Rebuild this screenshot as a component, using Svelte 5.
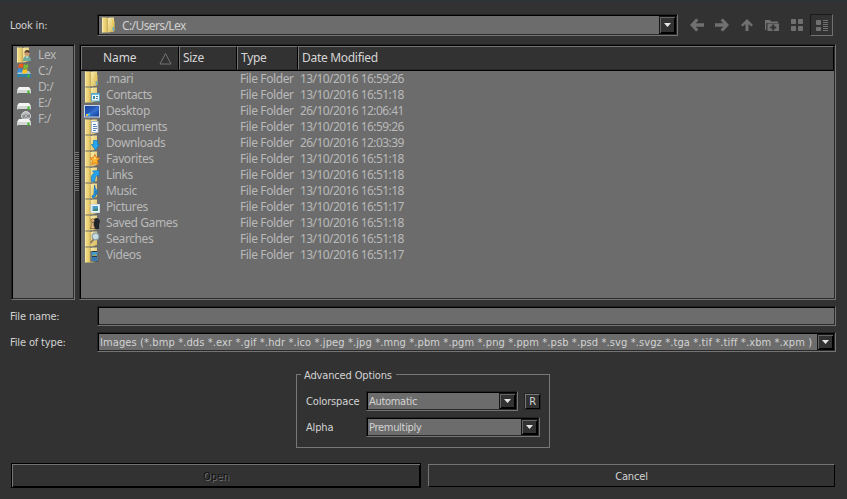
<script lang="ts">
  const places = [
    { name: 'Lex', icon: 'user' },
    { name: 'C:/', icon: 'windows' },
    { name: 'D:/', icon: 'drive' },
    { name: 'E:/', icon: 'drive' },
    { name: 'F:/', icon: 'disc' }
  ];

  const files = [
    { name: '.mari', icon: 'plain', date: '13/10/2016 16:59:26' },
    { name: 'Contacts', icon: 'contacts', date: '13/10/2016 16:51:18' },
    { name: 'Desktop', icon: 'desktop', date: '26/10/2016 12:06:41' },
    { name: 'Documents', icon: 'documents', date: '13/10/2016 16:59:26' },
    { name: 'Downloads', icon: 'downloads', date: '26/10/2016 12:03:39' },
    { name: 'Favorites', icon: 'favorites', date: '13/10/2016 16:51:18' },
    { name: 'Links', icon: 'links', date: '13/10/2016 16:51:18' },
    { name: 'Music', icon: 'music', date: '13/10/2016 16:51:18' },
    { name: 'Pictures', icon: 'pictures', date: '13/10/2016 16:51:17' },
    { name: 'Saved Games', icon: 'games', date: '13/10/2016 16:51:18' },
    { name: 'Searches', icon: 'searches', date: '13/10/2016 16:51:18' },
    { name: 'Videos', icon: 'videos', date: '13/10/2016 16:51:17' }
  ];

  const tools = ['back', 'forward', 'up', 'new', 'list', 'detail'];
  const filter = 'Images (*.bmp *.dds *.exr *.gif *.hdr *.ico *.jpeg *.jpg *.mng *.pbm *.pgm *.png *.ppm *.psb *.psd *.svg *.svgz *.tga *.tif *.tiff *.xbm *.xpm )';

  let view = $state('detail');
</script>

{#snippet icon(kind: string)}
  <svg class="icon" viewBox="0 0 16 16" width="16" height="16">
    {#if kind === 'drive' || kind === 'disc' || kind === 'windows'}
      {#if kind === 'disc'}
        <circle cx="10" cy="5" r="4.500" fill="#b9bdbe" stroke="#eee" stroke-width=".7" />
        <path d="M10 5l4-2v4zM10 5L6.500 8V4z" fill="#858b8c" />
        <circle cx="10" cy="5" r="1.400" fill="#e8e8e8" stroke="#5d5d5d" stroke-width=".7" />
      {/if}
      <path d="M3 8h10l2 3H1z" fill={kind === 'windows' ? '#a9c2cf' : '#f4f4f4'} />
      <rect x="1" y="11" width="14" height="4" rx=".8" fill={kind === 'windows' ? '#2f82a5' : '#d4d5d5'} />
      <path d="M1.500 14.500h13" stroke="#656b6c" />
      <rect x="11.500" y="11.500" width="2" height="3" fill="#3fbd22" />
      {#if kind === 'windows'}
        <path d="M3 1q2.500-1 4.500 0l-.8 4q-2-1-4.500 0z" fill="#ef5b1d" />
        <path d="M8 1.300q2 1 4.500 0l-.8 4q-2 1-4.500 0z" fill="#79bb32" />
        <path d="M2 5.700q2.300-1 4.500 0l-.8 4q-2-1-4.500 0z" fill="#348fdb" />
        <path d="M7 6q2 1 4.500 0l-.8 4q-2 1-4.500 0z" fill="#fbc51e" />
      {/if}
    {:else if kind === 'desktop'}
      <rect x=".5" y="2.500" width="15" height="11.500" fill="url(#screen)" stroke="#c9d5e5" />
      <path d="M1 13L14 3v4L5 13z" fill="#4a84d9" opacity=".35" />
      <rect x="2" y="11" width="2" height="2" fill="#e8c33d" />
      <rect x="4" y="10.500" width="2" height="2" fill="#48c8ef" />
    {:else}
      <path d="M1 .5h5.500v15H1z" fill="url(#folder)" />
      <path d="M6 1.500L8.500.5H13v13.500l-5 1.500-2-.5z" fill="url(#fold)" />
      <path d="M6.300 1.500v13.300" stroke="#b99843" stroke-width=".8" />
      <path d="M1.500 .5v15" stroke="#fbedb0" stroke-width=".8" />
      {#if kind === 'plain'}
        <path d="M11 3l2.500 1v10L11 15z" fill="#e7c95f" />
        <path d="M12.300 10v4" stroke="#58a6d5" stroke-width="1.200" />
      {:else if kind === 'user'}
        <circle cx="11" cy="6.500" r="2.500" fill="#c89b70" />
        <path d="M8.500 6q0-3 2.800-3T13.500 6q-3-1.500-5 0" fill="#584030" />
        <path d="M7 14q0-5 4-5t4 5z" fill="#6dab9e" />
        <path d="M10 9.500l1 2 1-2z" fill="#fff" />
      {:else if kind === 'contacts'}
        <rect x="7.500" y="6.500" width="8" height="7.500" fill="#eaf5fa" stroke="#5fa8c8" />
        <path d="M7.500 7h8" stroke="#4ea7ce" stroke-width="1.500" />
        <rect x="9" y="9" width="2" height="3" fill="#3f89ad" />
        <path d="M12 9.500h2M12 11.500h2" stroke="#507f9b" />
      {:else if kind === 'documents'}
        <rect x="7.500" y="2.500" width="6.500" height="11" fill="#fafcff" stroke="#aabacc" />
        <path d="M9 5.500h3M9 7.500h4M9 9.500h4M9 11.500h3" stroke="#5781bd" />
      {:else if kind === 'downloads'}
        <path d="M9.500 5.500h4v4h2L11.500 15l-4-5.500h2z" fill="#28a7ed" stroke="#1476bb" stroke-width=".7" />
      {:else if kind === 'favorites'}
        <path d="M11 3.500l1.400 3.200 3.300.3-2.300 2.600.8 4.200-3.200-2-3.200 2 .7-4.200L6 7l3.500-.3z" fill="#ffb62e" stroke="#e16c16" stroke-width=".8" />
        <path d="M11 5l.7 3h-2z" fill="#ffe99a" />
      {:else if kind === 'links'}
        <path d="M7.500 14.500q-1-7 3-8.500L8.500 4l6.500-.5v6L13.500 8q-2.500 1-3 6.500z" fill="#28a3e9" stroke="#1678bd" stroke-width=".7" />
      {:else if kind === 'music'}
        <path d="M10.500 2q0 3.500 2.500 5.500 1 2-.5 4 .5-3-1-3.500v5q-1 2-3 1.500-1.500-2 1.500-2.700z" fill="#229be6" stroke="#1674b7" stroke-width=".8" />
      {:else if kind === 'pictures'}
        <rect x="7" y="5.500" width="8.500" height="8" fill="#edf8ff" stroke="#c8dce8" />
        <rect x="8.500" y="7" width="5.500" height="5" fill="#4a9bc6" />
        <path d="M8.500 12l2-2.500 1.500 1 2-1.500v3z" fill="#38866d" />
      {:else if kind === 'games'}
        <path d="M10 4q4-3 6 2l-1 4v4h-5z" fill="#20252b" />
        <circle cx="8.700" cy="5.500" r="1.800" fill="#e2b779" stroke="#63472c" stroke-width=".6" />
        <path d="M7.700 7.500h2v3l1.500 3H6.500l1.200-3z" fill="#e5c08d" stroke="#63472c" stroke-width=".6" />
      {:else if kind === 'searches'}
        <circle cx="11.500" cy="5.500" r="3.300" fill="#c9dce1" stroke="#8aa1ac" stroke-width="1.200" />
        <path d="M9.500 8.500L6.500 12" stroke="#97815f" stroke-width="2" />
      {:else if kind === 'videos'}
        <rect x="6.500" y="4" width="8" height="10.500" fill="#253946" />
        <path d="M7.200 4.500v10M13.800 4.500v10" stroke="#e0e5e7" stroke-dasharray="1 1" />
        <rect x="8" y="5" width="5" height="4" fill="#4499d0" />
        <rect x="8" y="10" width="5" height="4" fill="#3878b4" />
        <path d="M8 9l3-2 2 2z" fill="#a0a65a" />
      {/if}
    {/if}
  </svg>
{/snippet}

{#snippet arrow()}
  <span class="drop"><svg viewBox="0 0 7 4" width="7" height="4"><path d="M0 0h7L3.500 4z" fill="#e6e6e6" /></svg></span>
{/snippet}

<svg class="defs" width="0" height="0">
  <defs>
    <linearGradient id="folder" x2="1"><stop stop-color="#f5e08c" /><stop offset="1" stop-color="#e2c566" /></linearGradient>
    <linearGradient id="fold" x2="1" y2="1"><stop stop-color="#fbefb1" /><stop offset="1" stop-color="#d9b955" /></linearGradient>
    <linearGradient id="screen" x2="1" y2="1"><stop stop-color="#173b94" /><stop offset=".6" stop-color="#2c66c9" /><stop offset="1" stop-color="#163c8e" /></linearGradient>
  </defs>
</svg>

<div class="dialog">
  <div class="look-row">
    <span class="look-label">Look in:</span>
    <div class="field look">{@render icon('plain')}<span class="path">C:/Users/Lex</span>{@render arrow()}</div>
    <div class="toolbar">
      {#each tools as tool}
        <button type="button" aria-label={tool} class:active={view === tool} onclick={() => { if (tool === 'list' || tool === 'detail') view = tool; }}>
          <svg viewBox="0 0 16 16" width="16" height="16" fill="#707070">
            {#if tool === 'back'}
              <path d="M1 8l6-6.500 2.500 1.700L6.800 6.200H15v3.600H6.800l2.700 3L7 14.500z" />
            {:else if tool === 'forward'}
              <path d="M15 8L9 1.500 6.500 3.200l2.700 3H1v3.600h8.200l-2.700 3L9 14.500z" />
            {:else if tool === 'up'}
              <path d="M8 2l6 6-1.700 1.500L9.500 7v7h-3V7L3.700 9.500 2 8z" />
            {:else if tool === 'new'}
              <path d="M1 3h5l1 1.500h7V6H2.300v7H1zM3.500 6.500H15V14H3.500z" />
              <path d="M8.200 7.500h2v2h2v2h-2v2h-2v-2h-2v-2h2z" fill="#323232" />
            {:else if tool === 'list'}
              <rect x="2" y="2" width="5" height="5" rx=".8" /><rect x="9" y="2" width="5" height="5" rx=".8" />
              <rect x="2" y="9" width="5" height="5" rx=".8" /><rect x="9" y="9" width="5" height="5" rx=".8" />
            {:else}
              <rect x="2" y="3" width="5" height="5" rx=".8" /><rect x="2" y="10" width="5" height="4" rx=".8" />
              <path d="M9 3h5v1H9zM9 5h5v1H9zM9 7h5v1H9zM9 9h5v1H9zM9 11h5v1H9zM9 13h5v1H9z" />
            {/if}
          </svg>
        </button>
      {/each}
    </div>
  </div>

  <div class="browser">
    <div class="field places">
      {#each places as place}
        <div class="place">{@render icon(place.icon)}<span>{place.name}</span></div>
      {/each}
    </div>
    <div class="splitter"></div>
    <div class="field files">
      <div class="head columns">
        <div class="name-head">Name <svg viewBox="0 0 13 13" width="13" height="13"><path d="M1 12L6.500 1.500 12 12z" fill="none" stroke="#747474" /></svg></div>
        <div>Size</div><div>Type</div><div>Date Modified</div>
      </div>
      {#each files as file}
        <div class="file columns">
          <div class="file-name">{@render icon(file.icon)}<span>{file.name}</span></div>
          <div></div><div>File Folder</div><div class="date">{file.date}</div>
        </div>
      {/each}
    </div>
  </div>

  <div class="form">
    <span>File name:</span><div class="field"></div>
    <span>File of type:</span><div class="field"><span class="value filter">{filter}</span>{@render arrow()}</div>
  </div>

  <fieldset class="options">
    <legend>Advanced Options</legend>
    <div class="option"><span>Colorspace</span><div class="field color"><span class="value">Automatic</span>{@render arrow()}</div><button type="button" class="reset">R</button></div>
    <div class="option"><span>Alpha</span><div class="field alpha"><span class="value">Premultiply</span>{@render arrow()}</div></div>
  </fieldset>

  <div class="actions">
    <button type="button" class="open" disabled>Open</button>
    <button type="button" class="cancel">Cancel</button>
  </div>
</div>

<style>
  :global(body) { margin: 0; background: #323232; overflow: hidden; }
  .dialog, .dialog * { box-sizing: border-box; }
  .dialog {
    width: 847px;
    height: 499px;
    padding: 13px 11px 0 10px;
    border-top: 1px solid #2b363b;
    background: #323232;
    color: #d2d2d2;
    font: 11px/14px "DejaVu Sans Condensed", "DejaVu Sans", sans-serif;
    letter-spacing: -0.15px;
    white-space: nowrap;
  }
  .defs { display: block; }
  .icon { display: block; flex: none; }
  button { font: inherit; letter-spacing: inherit; color: inherit; padding: 0; background: none; }
  .field {
    display: flex;
    align-items: center;
    border: 1px solid;
    border-color: #222 #747474 #747474 #222;
    background: #6c6c6c;
    box-shadow: inset 1px 1px #000, inset -1px -1px #292929;
  }
  .drop {
    display: flex;
    flex: none;
    align-self: stretch;
    align-items: center;
    justify-content: center;
    width: 17px;
    margin: 1px 1px 1px auto;
    background: #323232;
    border: 1px solid;
    border-color: #161616 #000 #000 #161616;
    box-shadow: inset 1px 1px #646464, inset -1px -1px #000;
  }
  .look-row { display: flex; height: 22px; }
  .look-label { width: 87px; padding-top: 5px; }
  .look { width: 581px; padding-left: 3px; color: #d0d0d0; font: 12px/16px "Noto Sans", sans-serif; letter-spacing: -0.6px; }
  .path { padding-left: 5px; padding-top: 2px; }
  .toolbar { display: flex; gap: 2px; margin-left: 7px; }
  .toolbar button { display: flex; align-items: center; justify-content: center; width: 23px; height: 22px; border: 1px solid transparent; }
  .toolbar .active { border-color: #191919 #707070 #707070 #191919; }

  .browser { display: flex; height: 256px; margin: 8px 0 6px 1px; font: 12px/16px "Noto Sans", sans-serif; letter-spacing: -0.4px; color: #b9b9b9; }
  .places { display: block; width: 64px; padding: 2px 0 0 4px; }
  .place { display: flex; height: 16px; gap: 6px; }
  .splitter { width: 4px; height: 40px; margin-top: 108px; background: repeating-linear-gradient(#777 0 1px, #292929 1px 2px); }
  .files { display: block; width: 757px; padding: 1px; }
  .columns { display: grid; grid-template-columns: 98px 58px 61px 1fr; }
  .head { height: 25px; background: #323232; color: #d6d6d6; letter-spacing: -0.3px; border-bottom: 1px solid #000; }
  .head div { border: 1px solid; border-color: #747474 #000 #292929 #747474; padding: 3px 0 0 3px; }
  .head .name-head { display: flex; justify-content: space-between; padding: 3px 6px 0 21px; letter-spacing: -0.1px; }
  .name-head svg { margin-top: 2px; }
  .file { height: 16px; }
  .file > div { padding-left: 3px; }
  .file .date { padding-left: 2px; letter-spacing: -0.57px; }
  .file .file-name { display: flex; gap: 6px; padding-left: 3px; }

  .form { display: grid; grid-template-columns: 87px 739px; grid-template-rows: 20px 20px; row-gap: 6px; align-items: center; }
  .form > span { padding-top: 2px; }
  .form .field { height: 20px; }
  .value { flex: 1; padding: 2px 0 0 2px; }
  .filter { letter-spacing: 0.11px; }
  .options {
    display: flex;
    flex-direction: column;
    width: 254px;
    height: 81px;
    margin: 15px 0 0 286px;
    padding: 9px 0 0 9px;
    border: 1px solid #777;
  }
  .options legend { padding: 2px 4px 0 3px; margin-left: -5px; line-height: 13px; }
  .option { display: flex; height: 20px; margin-bottom: 6px; align-items: center; }
  .option > span { width: 60px; padding-top: 2px; }
  .option .field { height: 20px; }
  .color { width: 152px; }
  .alpha { width: 174px; }
  .color .value, .alpha .value { letter-spacing: -0.3px; }
  .reset { width: 15px; height: 15px; margin-left: 7px; border: 1px solid; border-color: #777 #000 #000 #777; line-height: 13px; box-shadow: 0 0 0 1px #242424; }
  .actions { display: flex; align-items: center; gap: 7px; margin: 15px 0 0 1px; }
  .actions button { border: 1px solid; border-color: #747474 #000 #000 #747474; height: 23px; width: 407px; padding-top: 2px; }
  .actions .open { width: 410px; height: 25px; border: 1px solid #000; color: #111; text-shadow: 1px 1px #707070; box-shadow: inset 1px 1px #747474, inset -1px -1px #000; }
</style>
